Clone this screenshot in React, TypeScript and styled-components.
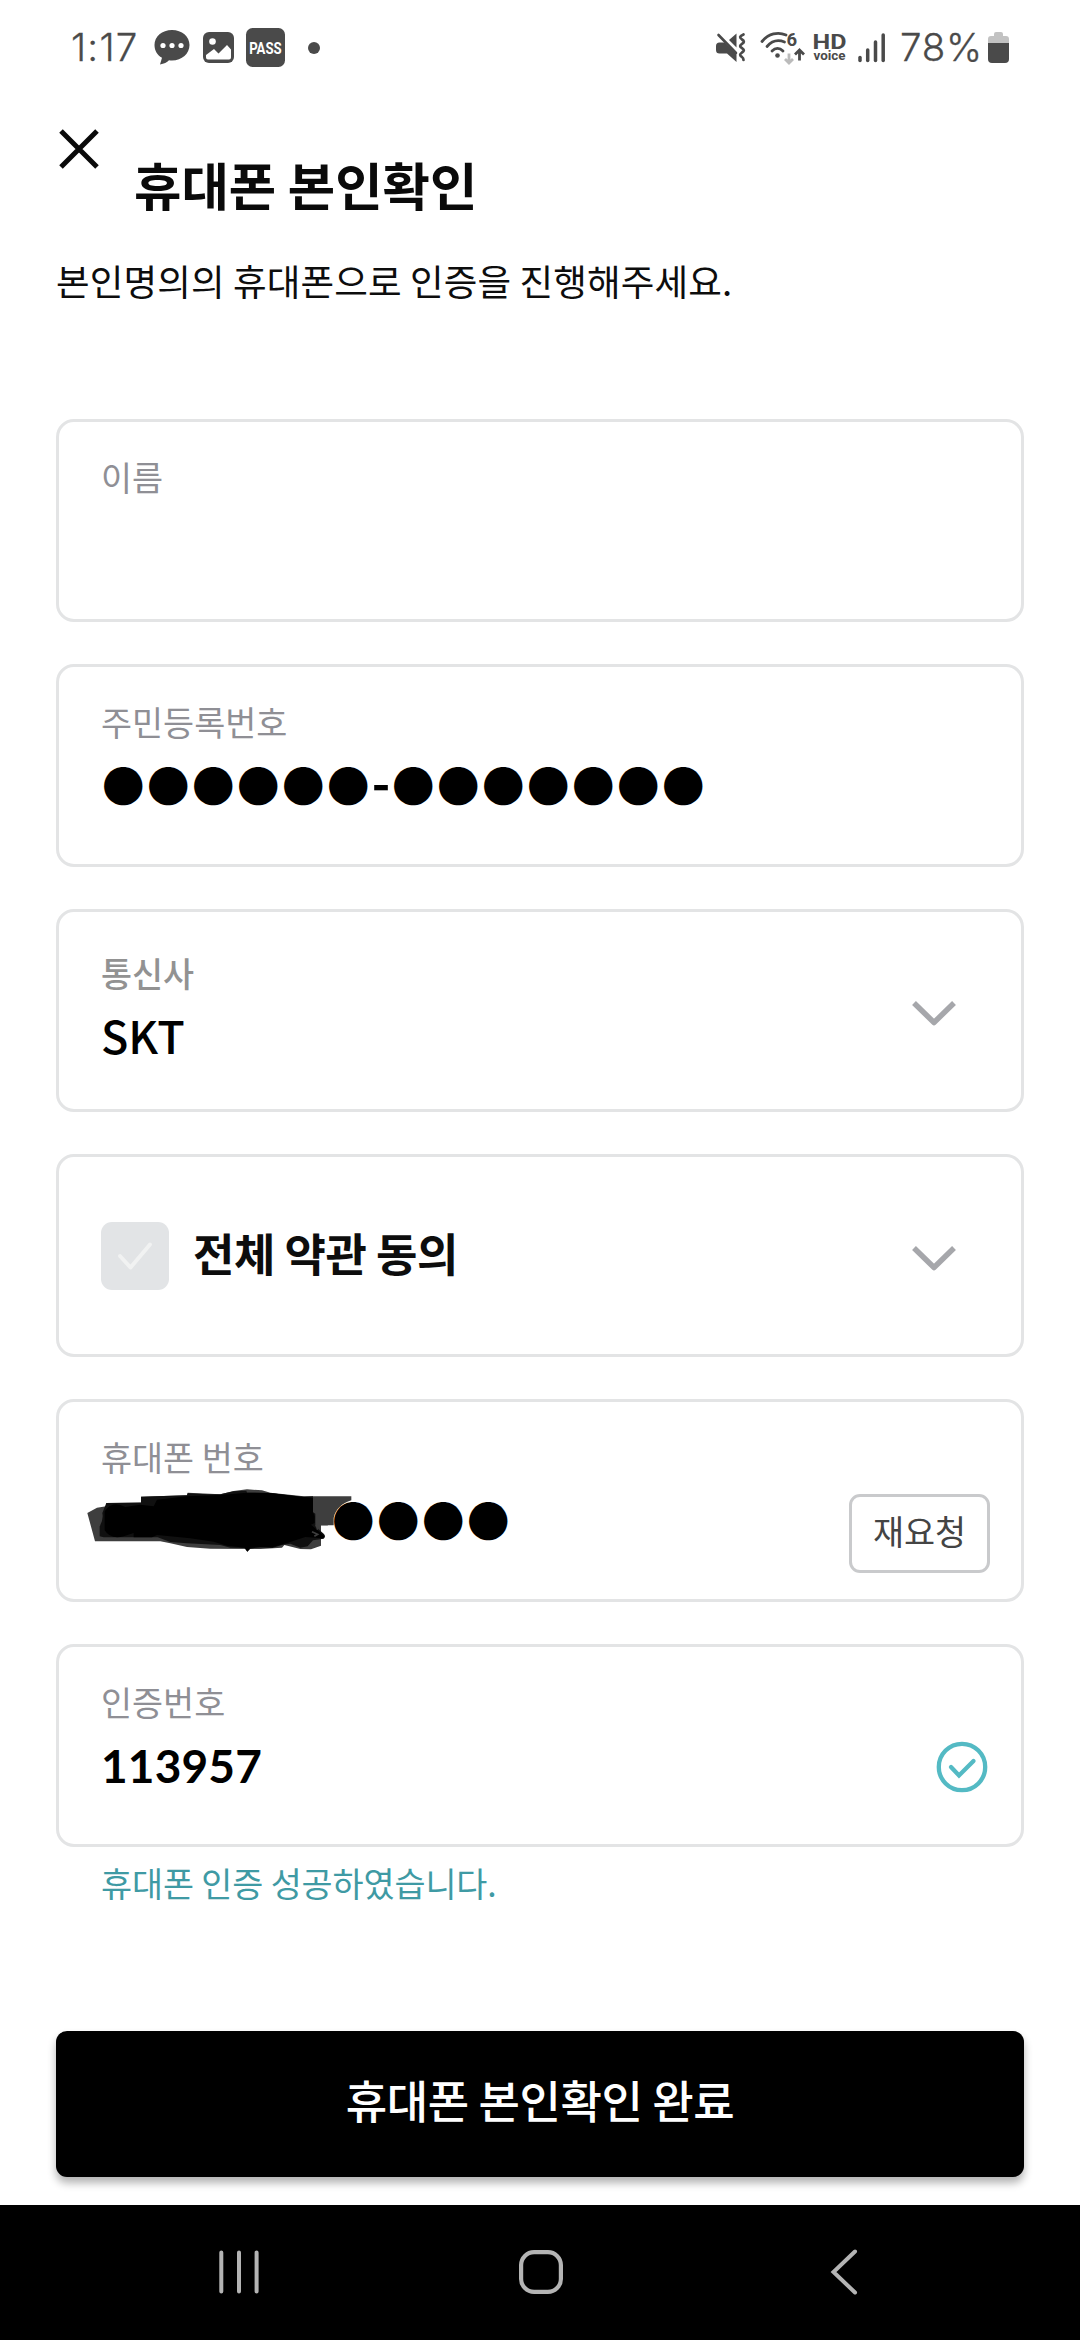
import React from "react";
import styled, { createGlobalStyle } from "styled-components";

const GlobalStyle = createGlobalStyle`
  *, *::before, *::after { box-sizing: border-box; }
  body {
    margin: 0;
    background: #fff;
    font-family: "Noto Sans CJK KR", "Noto Sans", sans-serif;
  }
  svg { display: block; flex: none; overflow: visible; }
`;

const Screen = styled.div`
  width: 1080px;
  height: 2340px;
  display: flex;
  flex-direction: column;
  background: #fff;
  overflow: hidden;
`;

/* ---------- status bar ---------- */

const StatusBar = styled.header`
  height: 95px;
  padding: 0 71px 0 71px;
  display: flex;
  align-items: center;
  justify-content: space-between;
  color: #4a4a4a;
`;

const StatusGroup = styled.div`
  display: flex;
  align-items: center;
`;

const StatusIcon = styled.span<{ $left: number }>`
  margin-left: ${(p) => p.$left}px;
  display: flex;
`;

const Dot = styled.span`
  width: 12px;
  height: 12px;
  border-radius: 50%;
  background: #4a4a4a;
`;

const StatusText = styled.span<{ $width: number; $spacing?: number }>`
  font-family: Inter, "Open Sans", sans-serif;
  font-weight: 300;
  font-size: 38.5px;
  line-height: 52px;
  padding-bottom: 2px;
  letter-spacing: ${(p) => p.$spacing ?? 0}px;
  width: ${(p) => p.$width}px;
  white-space: nowrap;
  -webkit-text-stroke: 0.3px #4a4a4a;
`;

/* ---------- page ---------- */

const Main = styled.main`
  flex: 1;
  padding: 0 56px;
  display: flex;
  flex-direction: column;
`;

const TitleRow = styled.div`
  display: flex;
  align-items: flex-start;
  gap: 35px;
  padding: 34px 0 0 3px;
`;

const CloseButton = styled.button`
  padding: 0;
  border: 0;
  background: none;
`;

const Title = styled.h1`
  margin: 19px 0 0;
  font-size: 51.5px;
  line-height: 72px;
  font-weight: 700;
  color: #0a0a0a;
`;

const Description = styled.p`
  margin: 34px 0 0;
  font-size: 36.5625px;
  line-height: 54px;
  letter-spacing: 0.12px;
  color: #0d0d0d;
`;

const Form = styled.form`
  margin-top: 111px;
  display: flex;
  flex-direction: column;
  gap: 42px;
`;

const Card = styled.section`
  height: 203px;
  padding: 0 31px 0 42px;
  border: 3px solid #e3e4e5;
  border-radius: 18px;
  display: flex;
  align-items: center;
  justify-content: space-between;
`;

const Field = styled.div<{ $top?: number }>`
  align-self: flex-start;
  padding-top: ${(p) => p.$top ?? 31}px;
  display: flex;
  flex-direction: column;
  gap: 5px;
`;

const Label = styled.label<{ $neutral?: boolean }>`
  font-size: 33.75px;
  line-height: 48px;
  color: ${(p) => (p.$neutral ? "#929292" : "#8f8f95")};
  font-weight: ${(p) => (p.$neutral ? 500 : 400)};
`;

const Value = styled.div`
  position: relative;
  display: flex;
  font-size: 45px;
  line-height: 66px;
  font-weight: 500;
  color: #000;
  white-space: nowrap;
`;

const Code = styled(Value)`
  font-family: Lato, sans-serif;
  font-weight: 700;
  font-size: 46px;
  line-height: 69px;
  letter-spacing: 0.15px;
`;

const Bullets = styled.span`
  font-size: 42.5px;
  line-height: 65px;
  letter-spacing: 2.5px;
  padding-left: 1px;
  margin-right: -1px;
`;

const Hyphen = styled.span`
  width: 20px;
  font-size: 50px;
  line-height: 59px;
  font-weight: 700;
  text-align: center;
`;

const HiddenPrefix = styled.span`
  width: 210px;
`;

const Scribble = styled.svg`
  position: absolute;
  left: -14px;
  top: 2px;
`;

const ChevronSlot = styled.div`
  padding-right: 34px;
  padding-top: 4px;
`;

const Agreement = styled.div`
  display: flex;
  align-items: center;
  gap: 24px;
`;

const CheckBox = styled.span`
  width: 68px;
  height: 68px;
  border-radius: 11px;
  background: #e2e4e6;
  display: flex;
  align-items: center;
  justify-content: center;
`;

const AgreementText = styled.span`
  font-size: 45px;
  line-height: 66px;
  letter-spacing: -0.5px;
  font-weight: 700;
  color: #0d0d0d;
  margin-top: -6px;
`;

const ResendButton = styled.button`
  width: 141px;
  height: 79px;
  margin-top: 66px;
  padding: 0 0 6px;
  border: 3px solid #c9cacc;
  border-radius: 11px;
  background: #fff;
  font-family: inherit;
  font-size: 33.75px;
  line-height: 48px;
  color: #444;
`;

const VerifiedSlot = styled.div`
  padding: 42px 2px 0 0;
`;

const SuccessMessage = styled.p`
  margin: 12px 0 0 45px;
  font-size: 33.75px;
  line-height: 48px;
  letter-spacing: -0.1px;
  color: #3f9aa4;
`;

const SubmitButton = styled.button`
  margin-top: 124px;
  height: 146px;
  padding: 0 0 8px;
  border: 0;
  border-radius: 11px;
  background: #000;
  color: #fff;
  font-family: inherit;
  font-size: 45px;
  line-height: 66px;
  letter-spacing: -0.4px;
  font-weight: 500;
  box-shadow: 0 6px 9px rgba(0, 0, 0, 0.3);
`;

/* ---------- navigation bar ---------- */

const NavBar = styled.nav`
  height: 135px;
  padding: 0 213px 1px 215px;
  background: #000;
  display: flex;
  align-items: center;
  justify-content: space-between;
`;

const ink = "#4a4a4a";

const ChatIcon = () => (
  <svg width="36" height="36" viewBox="0 0 36 36">
    <path d="M18 0C8 0 .5 6.600 .5 15c0 5.500 2.700 10 7.500 12.800L6 34.500c4-.6 7-2.200 9-4.200 1 .2 2 .2 3 .2 10 0 17.500-7 17.500-15.500S28 0 18 0z" fill={ink} />
    <circle cx="9" cy="15.500" r="2.600" fill="#fff" />
    <circle cx="18" cy="15.500" r="2.600" fill="#fff" />
    <circle cx="27" cy="15.500" r="2.600" fill="#fff" />
  </svg>
);

const PictureIcon = () => (
  <svg width="31" height="31" viewBox="0 0 31 31">
    <rect width="31" height="31" rx="6" fill={ink} />
    <circle cx="9.500" cy="9.500" r="3.300" fill="#fff" />
    <path d="M3 23l8-6 4.500 4.500L24 13l4 4.500V25.500q0 2-2 2H5q-2 0-2-2z" fill="#fff" />
  </svg>
);

const PassIcon = () => (
  <svg width="39" height="39" viewBox="0 0 39 39">
    <rect width="39" height="39" rx="6.500" fill={ink} />
    <text x="3.200" y="25.800" fontFamily="Roboto, sans-serif" fontWeight="700" fontSize="17" fill="#fff" textLength="32.500" lengthAdjust="spacingAndGlyphs">PASS</text>
  </svg>
);

const MuteIcon = () => (
  <svg width="30" height="30" viewBox="0 0 30 30">
    <path d="M0 13q0-3.500 3.500-3.500h5L20.500 21.500V29L11 20.500H3.500Q0 20.500 0 17z" fill={ink} />
    <path d="M13 7L20.500 .5V14.500z" fill={ink} />
    <path d="M2.500 2L20 20" stroke={ink} strokeWidth="2.600" strokeLinecap="round" />
    <path d="M27.500 1.500c-4.500 2-4 3.200-1.500 5 2.500 1.600 2.500 2.700 0 4.300-2.500 1.700-2.500 2.700 0 4.300 2.500 1.700 2.500 2.800 0 4.400-2.500 1.700-2.500 3 0 4.500q1.500 1 1.500 3" fill="none" stroke={ink} strokeWidth="2.700" strokeLinecap="round" />
  </svg>
);

const WifiIcon = () => (
  <svg width="45" height="34" viewBox="0 0 45 34">
    <g fill="none" stroke={ink} strokeWidth="2.800" strokeLinecap="round">
      <path d="M2 10.500C8.500 2.500 18 .5 26 4" />
      <path d="M7 15.500c5-5.800 11.500-7 17.500-4.500" />
      <path d="M12 20c3.500-3.600 7.500-3.600 11 0" />
    </g>
    <circle cx="17.500" cy="24.500" r="2.300" fill={ink} />
    <text x="26.500" y="15" fontFamily="Roboto, sans-serif" fontWeight="700" fontSize="18.500" fill={ink}>6</text>
    <path d="M29 22.500v9M25 28l4 4 4-4" fill="none" stroke="#bbb" strokeWidth="2.800" />
    <path d="M39.500 29.500V19.500M35 23.500l4.500-4.500 4.500 4.500" fill="none" stroke={ink} strokeWidth="2.800" />
  </svg>
);

const HdVoiceIcon = () => (
  <svg width="34" height="30" viewBox="0 0 34 30">
    <text x="-.5" y="15.500" fontFamily="Roboto, sans-serif" fontWeight="700" fontSize="21" fill={ink} textLength="34" lengthAdjust="spacingAndGlyphs">HD</text>
    <text x=".5" y="27" fontFamily="Roboto, sans-serif" fontWeight="700" fontSize="13" fill={ink} textLength="32" lengthAdjust="spacingAndGlyphs">voice</text>
  </svg>
);

const SignalIcon = () => (
  <svg width="28" height="30" viewBox="0 0 28 30">
    <g stroke={ink} strokeWidth="3.500" strokeLinecap="round">
      <path d="M2 24.500v3" />
      <path d="M9.700 17v10.500" />
      <path d="M17.500 9v18.500" />
      <path d="M25.200 2v25.500" />
    </g>
  </svg>
);

const BatteryIcon = () => (
  <svg width="21" height="31" viewBox="0 0 21 31">
    <path d="M0 11V7q0-3 3-3h3V2q0-2 2-2h5q2 0 2 2v2h3q3 0 3 3v4z" fill="#c2c2c2" />
    <path d="M0 11h21v16q0 4-4 4H4q-4 0-4-4z" fill={ink} />
  </svg>
);

const ChevronDown = () => (
  <svg width="44" height="26" viewBox="0 0 44 26">
    <path d="M2 3l20 19.500L42 3" fill="none" stroke="#a6a7ab" strokeWidth="5.500" strokeLinejoin="round" />
  </svg>
);

/* Marker strokes that cover the first digits of the phone number. */
const Redaction = () => (
  <Scribble width="265" height="65" viewBox="50 295 795 195" aria-hidden="true">
    <path d="M51 370L80 354 108 350V340L212 338V321L350 317 352 309 450 314 490 304 530 299 575 302 600 309 700 320H843V332C815 340 795 360 790 385V407H752V468L722 479 690 478 642 466 635 474 570 478 420 477 350 472 300 461 270 455H74z" fill="#3e3e3e" />
    <path d="M108 340H212V321L255 320 350 317 352 311 412 314 450 314 490 305 528 303 530 309 600 310 690 322 728 320V368L735 372V400L735 410 760 432Q768 440 760 447L728 452 712 470 690 474 660 462 635 466 606 475 570 472 540 477 531 486 522 475 480 474 450 466 350 461 300 457 262 443H100L88 440V410Q100 390 96 370z" fill="#101010" />
    <path d="M260 330L350 320 450 316 530 309 600 310 728 325V368L733 380V400L722 405 758 436Q766 441 757 446L705 442 650 460 606 473 540 474 531 486 524 474 470 468 430 456 360 446 260 436 245 443H190V430L160 440Q120 450 103 422V365Q125 330 165 352L210 345 250 350z" fill="#000" />
    <path d="M725 426L742 434 732 440M738 405L742 420" fill="none" stroke="#3e3e3e" strokeWidth="5" />
  </Scribble>
);

export default function App() {
  return (
    <>
      <GlobalStyle />
      <Screen>
        <StatusBar>
          <StatusGroup>
            <StatusText $width={83} $spacing={1.2}>1:17</StatusText>
            <ChatIcon />
            <StatusIcon $left={13}><PictureIcon /></StatusIcon>
            <StatusIcon $left={12}><PassIcon /></StatusIcon>
            <StatusIcon $left={23}><Dot /></StatusIcon>
          </StatusGroup>
          <StatusGroup>
            <MuteIcon />
            <StatusIcon $left={14}><WifiIcon /></StatusIcon>
            <StatusIcon $left={8}><HdVoiceIcon /></StatusIcon>
            <StatusIcon $left={11}><SignalIcon /></StatusIcon>
            <StatusIcon $left={14}>
              <StatusText $width={88} $spacing={0.7}>78%</StatusText>
            </StatusIcon>
            <BatteryIcon />
          </StatusGroup>
        </StatusBar>

        <Main>
          <TitleRow>
            <CloseButton type="button" aria-label="닫기">
              <svg width="40" height="40" viewBox="0 0 40 40">
                <path d="M2 2l36 36M38 2L2 38" stroke="#0a0a0a" strokeWidth="5" />
              </svg>
            </CloseButton>
            <Title>휴대폰 본인확인</Title>
          </TitleRow>
          <Description>본인명의의 휴대폰으로 인증을 진행해주세요.</Description>

          <Form>
            <Card>
              <Field><Label>이름</Label></Field>
            </Card>
            <Card>
              <Field>
                <Label>주민등록번호</Label>
                <Value>
                  <Bullets>●●●●●●</Bullets>
                  <Hyphen>-</Hyphen>
                  <Bullets>●●●●●●●</Bullets>
                </Value>
              </Field>
            </Card>
            <Card>
              <Field $top={37}>
                <Label $neutral>통신사</Label>
                <Value>SKT</Value>
              </Field>
              <ChevronSlot><ChevronDown /></ChevronSlot>
            </Card>
            <Card>
              <Agreement>
                <CheckBox>
                  <svg width="34" height="28" viewBox="0 0 34 28">
                    <path d="M2 14l10.500 11.500L32 2.500" fill="none" stroke="#f1f2f2" strokeWidth="4" strokeLinecap="round" strokeLinejoin="round" />
                  </svg>
                </CheckBox>
                <AgreementText>전체 약관 동의</AgreementText>
              </Agreement>
              <ChevronSlot><ChevronDown /></ChevronSlot>
            </Card>
            <Card>
              <Field>
                <Label>휴대폰 번호</Label>
                <Value>
                  <Redaction />
                  <HiddenPrefix />
                  <Hyphen>-</Hyphen>
                  <Bullets>●●●●</Bullets>
                </Value>
              </Field>
              <ResendButton type="button">재요청</ResendButton>
            </Card>
            <Card>
              <Field>
                <Label>인증번호</Label>
                <Code>113957</Code>
              </Field>
              <VerifiedSlot>
                <svg width="52" height="52" viewBox="0 0 52 52">
                  <circle cx="26" cy="26" r="23.200" fill="none" stroke="#54bac4" strokeWidth="4.300" />
                  <path d="M15 26l8 8.500L37.500 20" fill="none" stroke="#54bac4" strokeWidth="4.300" strokeLinecap="round" />
                </svg>
              </VerifiedSlot>
            </Card>
          </Form>
          <SuccessMessage>휴대폰 인증 성공하였습니다.</SuccessMessage>
          <SubmitButton type="button">휴대폰 본인확인 완료</SubmitButton>
        </Main>

        <NavBar>
          <svg width="48" height="48" viewBox="0 0 48 48">
            <path d="M6.300 4.500v39M24 4.500v39M41.600 4.500v39" stroke="#b4b4b4" strokeWidth="4" strokeLinecap="round" />
          </svg>
          <svg width="48" height="48" viewBox="0 0 48 48">
            <rect x="4.100" y="4.100" width="39.800" height="39.800" rx="13" fill="none" stroke="#b4b4b4" strokeWidth="4.200" />
          </svg>
          <svg width="48" height="48" viewBox="0 0 48 48">
            <path d="M36 3.500L14.500 24 36 44.500" fill="none" stroke="#b4b4b4" strokeWidth="4" strokeLinecap="round" />
          </svg>
        </NavBar>
      </Screen>
    </>
  );
}
